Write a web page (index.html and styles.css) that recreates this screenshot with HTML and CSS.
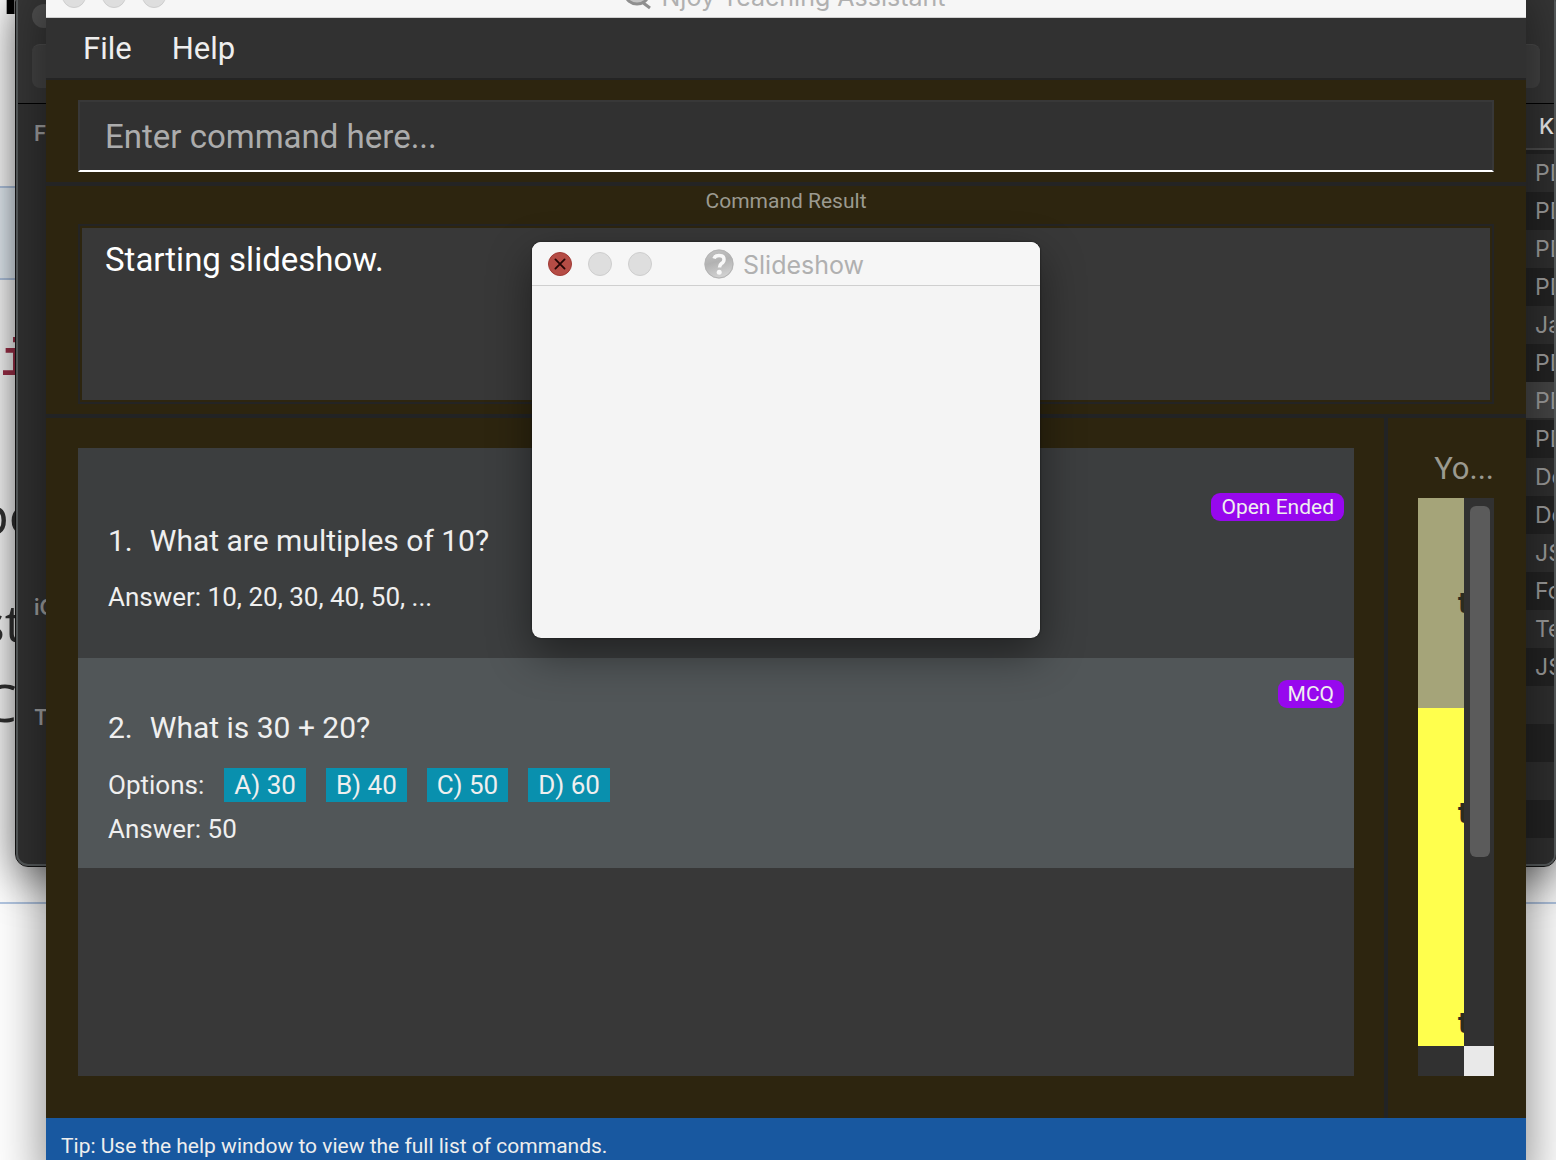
FILE: index.html
```html
<!DOCTYPE html>
<html lang="en">
<head>
<meta charset="utf-8">
<title>Njoy Teaching Assistant</title>
<link rel="stylesheet" href="styles.css">
</head>
<body>
<div class="desktop">
  <div class="page">
    <div class="page-band"></div>
    <div class="page-rule"></div>
    <span class="frag frag-heading">I</span>
    <span class="frag frag-code">i</span>
    <span class="frag frag-be">be</span>
    <span class="frag frag-st">st</span>
    <span class="frag frag-c">C</span>
  </div>

  <section class="finder">
    <header class="finder-bar">
      <span class="finder-dot"></span>
      <span class="finder-tool"></span>
    </header>
    <div class="finder-body">
      <nav class="finder-side">
        <span class="side-favorites">F</span>
        <span class="side-cloud">iC</span>
        <span class="side-tags">T</span>
      </nav>
      <div class="finder-files">
        <div class="files-head">Ki</div>
        <ul class="files">
          <li>PD</li><li>PD</li><li>PD</li><li>PD</li><li>Ja</li><li>PD</li>
          <li class="selected">PD</li><li>PD</li><li>De</li><li>De</li><li>JS</li>
          <li>Fo</li><li>Te</li><li>JS</li><li></li><li></li><li></li><li></li><li></li>
        </ul>
      </div>
    </div>
  </section>

  <main class="app">
    <header class="titlebar">
      <span class="lights"><i class="light"></i><i class="light"></i><i class="light"></i></span>
      <svg class="title-icon" viewBox="0 0 30 30" aria-hidden="true"><ellipse cx="14" cy="14" rx="11" ry="9" fill="#c4c4c4" stroke="#8f8f8f" stroke-width="3"/><path d="M19 21l8 6" stroke="#8f8f8f" stroke-width="3"/></svg>
      <h1 class="title">Njoy Teaching Assistant</h1>
    </header>
    <nav class="menu">
      <button type="button">File</button>
      <button type="button">Help</button>
    </nav>
    <div class="command">
      <input class="command-input" type="text" placeholder="Enter command here..." aria-label="Command">
    </div>
    <div class="result">
      <label class="result-label" for="result">Command Result</label>
      <div class="result-frame">
        <textarea id="result" class="result-text" readonly>Starting slideshow.</textarea>
      </div>
    </div>
    <div class="panels">
      <div class="questions-pane">
        <ul class="questions">
          <li class="question">
            <span class="tag">Open Ended</span>
            <h2><span>1.</span><span>What are multiples of 10?</span></h2>
            <p>Answer: 10, 20, 30, 40, 50, ...</p>
          </li>
          <li class="question alt">
            <span class="tag">MCQ</span>
            <h2><span>2.</span><span>What is 30 + 20?</span></h2>
            <div class="options">
              <span>Options:</span>
              <span class="option">A) 30</span>
              <span class="option">B) 40</span>
              <span class="option">C) 50</span>
              <span class="option">D) 60</span>
            </div>
            <p>Answer: 50</p>
          </li>
        </ul>
      </div>
      <div class="students-pane">
        <h2 class="students-title">Yo...</h2>
        <div class="students">
          <ul class="students-list">
            <li>t</li><li>t</li><li>t</li>
          </ul>
          <div class="vbar"><div class="thumb"></div></div>
          <div class="hbar"></div>
          <div class="corner"></div>
        </div>
      </div>
    </div>
    <footer class="tip">Tip: Use the help window to view the full list of commands.</footer>
  </main>

  <section class="dialog" role="dialog" aria-labelledby="dialog-title">
    <header class="titlebar">
      <span class="lights">
        <button class="light close" type="button" aria-label="Close"><svg viewBox="0 0 24 24"><path d="M7 7l10 10M17 7L7 17" stroke="#240605" stroke-width="2" stroke-linecap="round"/></svg></button>
        <i class="light"></i><i class="light"></i>
      </span>
      <svg class="title-icon" viewBox="0 0 30 30" aria-hidden="true">
        <defs><linearGradient id="g" x1="0" y1="0" x2="0.3" y2="1"><stop offset="0" stop-color="#c6c6c6"/><stop offset="0.5" stop-color="#b2b2b2"/><stop offset="1" stop-color="#d0d0d0"/></linearGradient></defs>
        <circle cx="15" cy="15" r="14.5" fill="url(#g)"/>
        <circle cx="15" cy="15" r="14" fill="none" stroke="#b4b4b4"/>
        <path d="M10 9.500Q11 6.500 15 6.500Q20 6.500 20 10.500Q20 13 17.500 14.500Q15.500 16 15.500 18.500" fill="none" stroke="#f8f8f8" stroke-width="3.500"/>
        <circle cx="15.200" cy="23.300" r="2.500" fill="#f8f8f8"/>
      </svg>
      <h2 class="title" id="dialog-title">Slideshow</h2>
    </header>
  </section>
</div>
</body>
</html>
```
FILE: styles.css
```css
* { box-sizing: border-box; }
body { margin: 0; font-family: Roboto, "Liberation Sans", sans-serif; }
h1, h2, p, ul { margin: 0; padding: 0; font-weight: 400; }
ul { list-style: none; }
button, input, textarea { font: inherit; color: inherit; border: 0; padding: 0; background: none; }

.desktop { position: relative; height: 100vh; overflow: hidden; background: #fff; }

/* Web page at the back */
.page { position: absolute; inset: 0; overflow: hidden; font-family: "Open Sans", sans-serif; color: #333; }
.page-band { margin-top: 186px; height: 94px; background: #eaf3fa; border: solid #b4c8e4; border-width: 2px 0; }
.page-rule { margin-top: 622px; height: 2px; background: #b4c8e4; }
.frag { position: absolute; font-size: 52px; line-height: 60px; font-weight: 500; }
.frag-heading { left: 2px; top: -36px; color: #000; font-weight: 700; }
.frag-code { left: 0; top: 332px; font-family: "Liberation Mono", monospace; font-weight: 700; color: #a2304a; }
.frag-be { left: -23px; top: 484px; }
.frag-st { left: -20px; top: 592px; }
.frag-c { left: -16px; top: 672px; }

/* File manager window */
.finder {
  position: absolute; left: 16px; right: 0; top: -10px; height: 876px;
  display: flex; flex-direction: column; overflow: hidden;
  border: 2px solid #565a5b; outline: 1px solid #111; border-radius: 12px;
  background: #313131; color: #9d9d9d; font-family: Inter, sans-serif; font-size: 22px;
  box-shadow: 0 12px 44px rgba(0,0,0,.6);
}
.finder-bar { position: relative; height: 112px; flex: none; background: #363636; border-bottom: 1px solid #000; padding: 12px 14px; }
.finder-dot { display: block; width: 24px; height: 24px; border-radius: 50%; background: #505050; }
.finder-tool { display: block; height: 44px; margin-top: 16px; border-radius: 8px; background: #434343; border-top: 1px solid #4c4c4c; }
.finder-body { display: flex; flex: 1; min-height: 0; }
.finder-side { flex: 1; display: flex; flex-direction: column; padding: 16px; font-weight: 600; line-height: 28px; font-size: 21px; }
.side-cloud { margin-top: 446px; }
.side-tags { margin-top: 82px; }
.finder-files { width: 30px; background: #323232; overflow: hidden; }
.files-head { height: 50px; padding: 7px 0 0 15px; line-height: 30px; color: #eee; font-weight: 500; border-bottom: 4px solid #242424; box-shadow: inset 0 -2px #4c4c4c; }
.files li { height: 38px; padding-left: 11px; line-height: 38px; font-size: 23px; background: #2f2f2f; color: #9d9d9d; }
.files li:nth-child(even) { background: #232323; }
.files li.selected { background: #454545; border-bottom: 2px solid #2f2f2f; }

/* Shared window chrome */
.titlebar { position: relative; display: flex; align-items: center; justify-content: center; gap: 9px; height: 44px; flex: none; background: #f6f6f6; border-bottom: 1px solid #cfcfcf; font-family: Inter, sans-serif; color: #b0b0b0; }
.lights { position: absolute; left: 16px; top: 10px; display: flex; gap: 16px; }
.light { display: block; width: 24px; height: 24px; border-radius: 50%; background: #dedede; border: 1px solid #cecece; }
.close { background: #b54c45; border-color: #a03a35; }
.close svg { display: block; }
.title-icon { width: 30px; height: 30px; }
.title { font-size: 25px; line-height: 32px; padding-top: 2px; }

/* Main window */
.app {
  position: absolute; left: 46px; right: 30px; top: -26px; bottom: -14px;
  display: flex; flex-direction: column; background: #2d250f;
  box-shadow: 0 20px 50px rgba(0,0,0,.5);
}
.app .titlebar { padding-right: 4px; }
.menu { display: flex; gap: 40px; height: 62px; flex: none; padding: 0 37px; background: #313131; border-bottom: 2px solid #242424; color: #eee; font-size: 31px; }
.command { padding: 20px 32px 10px; border-bottom: 4px solid #242424; }
.command-input { display: block; width: 100%; height: 72px; padding: 0 25px; border: 2px solid #383838; border-bottom-color: #fff; background: #313131; font-size: 33px; color: #fff; }
.command-input::placeholder { color: #acacac; opacity: 1; }
.result { display: flex; flex-direction: column; padding: 0 32px 10px; border-bottom: 4px solid #222324; }
.result-label { height: 38px; line-height: 30px; text-align: center; font-size: 21px; color: #9b9a90; }
.result-frame { border: 2px solid #242424; padding: 2px; }
.result-text { display: block; width: 100%; height: 172px; padding: 10px 23px; background: #383838; color: #fff; font-size: 33px; line-height: 44px; resize: none; outline: 0; }
.panels { display: flex; flex: 1; min-height: 0; }
.questions-pane { flex: 1; display: flex; padding: 30px 30px 42px 32px; border-right: 4px solid #222324; }
.questions { flex: 1; background: #383838; color: #efefef; font-size: 26px; }
.question { display: flex; flex-direction: column; justify-content: flex-end; height: 210px; padding: 0 10px 40px 30px; background: #3c3e3f; }
.alt { background: #515658; padding-bottom: 18px; }
.tag { align-self: flex-end; height: 28px; padding: 0 10px; border-radius: 9px; background: #9708ee; font-size: 21px; line-height: 28px; }
.question h2 { display: flex; gap: 17px; height: 40px; font-size: 30px; line-height: 40px; margin-bottom: 15px; }
.question p { line-height: 42px; }
.options { display: flex; align-items: center; gap: 20px; height: 34px; margin: 5px 0 6px; }
.option { padding: 0 10px; line-height: 34px; background: #0990ae; }
.students-pane { width: 138px; display: flex; flex-direction: column; padding: 30px 32px 42px 30px; }
.students-title { height: 50px; line-height: 42px; text-align: right; font-size: 31px; color: #9b9a90; }
.students { flex: 1; min-height: 0; display: grid; grid-template: 1fr 30px / 1fr 30px; }
.students-list { overflow: hidden; }
.students-list li { height: 210px; padding-left: 40px; line-height: 210px; font-size: 30px; font-weight: 700; background: #ffff4d; color: #2c2c20; }
.students-list li:first-child { background: #a5a479; }
.vbar { background: #313131; padding: 8px 4px 0 6px; }
.thumb { height: 65%; border-radius: 6px; background: #5b5b5b; }
.hbar { background: #313131; }
.corner { background: #e9e9e9; }
.tip { flex: none; height: 56px; padding: 0 15px; line-height: 56px; background: #1858a0; color: #eee; font-size: 21px; }

/* Slideshow window */
.dialog { position: absolute; top: 242px; left: calc(50% + 8px); width: 508px; height: 396px; margin-left: -254px; border-radius: 9px; overflow: hidden; background: #f4f4f4; box-shadow: 0 0 2px #111, 0 16px 44px rgba(0,0,0,.45); }
.dialog .titlebar { padding-right: 4px; }
```
